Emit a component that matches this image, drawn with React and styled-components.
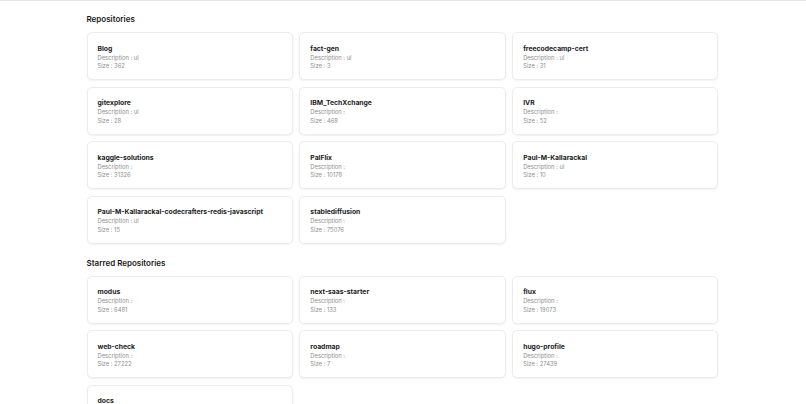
import React from "react";
import styled, { createGlobalStyle } from "styled-components";

const GlobalStyle = createGlobalStyle`
  html, body { margin: 0; padding: 0; background: #ffffff; }
  body { font-family: Inter, "Noto Sans", "Liberation Sans", sans-serif; color: #111; }
`;

const TopBar = styled.div`
  height: 0;
  border-top: 1px solid #e6e6e6;
`;

const Main = styled.main`
  width: 633px;
  margin: 0 auto;
  padding: 13px 1px 0 0;
  box-sizing: border-box;
`;

const Section = styled.section`
  display: flex;
  flex-direction: column;
  gap: 7px;
  margin-bottom: 14px;
`;

const Heading = styled.h2`
  margin: 0;
  font-size: 8px;
  line-height: 11px;
  font-weight: 600;
  color: #1a1a1a;
`;

const Grid = styled.div`
  display: grid;
  grid-template-columns: repeat(3, 1fr);
  gap: 6.5px;
`;

const Card = styled.div`
  height: 48px;
  box-sizing: border-box;
  padding: 10.5px 10px 9px;
  border: 1px solid #ececec;
  border-radius: 5px;
  box-shadow: 0 1px 2px rgba(0, 0, 0, 0.06);
  background: #fff;
  display: flex;
  flex-direction: column;
`;

const Title = styled.div`
  font-size: 6.8px;
  line-height: 10px;
  font-weight: 700;
  color: #1b1b1b;
  white-space: nowrap;
`;

const Meta = styled.div`
  font-size: 5.8px;
  line-height: 8.5px;
  color: #8e8e8e;
`;

const repos = [
  ["Blog", "ul", 362],
  ["fact-gen", "ul", 3],
  ["freecodecamp-cert", "ul", 31],
  ["gitexplore", "ul", 28],
  ["IBM_TechXchange", "", 468],
  ["IVR", "", 52],
  ["kaggle-solutions", "", 31326],
  ["PalFlix", "", 10178],
  ["Paul-M-Kallarackal", "ul", 10],
  ["Paul-M-Kallarackal-codecrafters-redis-javascript", "ul", 15],
  ["stablediffusion", "", 75076],
];

const starred = [
  ["modus", "", 6481],
  ["next-saas-starter", "", 133],
  ["flux", "", 19073],
  ["web-check", "", 27222],
  ["roadmap", "", 7],
  ["hugo-profile", "", 27439],
  ["docs", "", 0],
];

function RepoCard({ name, desc, size }) {
  return (
    <Card>
      <Title>{name}</Title>
      <Meta>Description : {desc}</Meta>
      <Meta>Size : {size}</Meta>
    </Card>
  );
}

function RepoSection({ title, items }) {
  return (
    <Section>
      <Heading>{title}</Heading>
      <Grid>
        {items.map(([n, d, s]) => (
          <RepoCard key={n} name={n} desc={d} size={s} />
        ))}
      </Grid>
    </Section>
  );
}

export default function App() {
  return (
    <>
      <GlobalStyle />
      <TopBar />
      <Main>
        <RepoSection title="Repositories" items={repos} />
        <RepoSection title="Starred Repositories" items={starred} />
      </Main>
    </>
  );
}
